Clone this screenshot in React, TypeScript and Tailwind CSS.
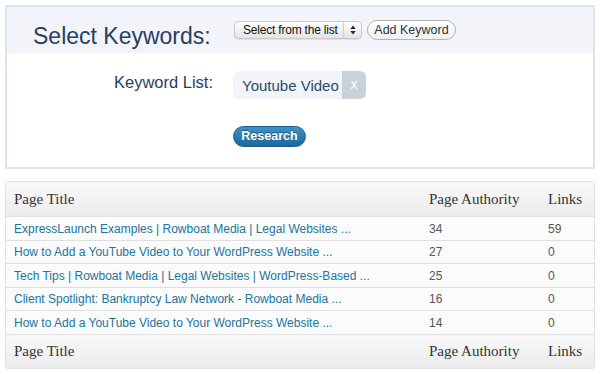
const rows = [
  { title: "ExpressLaunch Examples | Rowboat Media | Legal Websites ...", pa: 34, links: 59 },
  { title: "How to Add a YouTube Video to Your WordPress Website ...", pa: 27, links: 0 },
  { title: "Tech Tips | Rowboat Media | Legal Websites | WordPress-Based ...", pa: 25, links: 0 },
  { title: "Client Spotlight: Bankruptcy Law Network - Rowboat Media ...", pa: 16, links: 0 },
  { title: "How to Add a YouTube Video to Your WordPress Website ...", pa: 14, links: 0 },
];

function HeadRow() {
  return (
    <div className="grid grid-cols-[415px_119px_1fr] items-center h-full text-[15px] text-[#333] font-['Liberation_Serif',serif]">
      <div className="px-2">Page Title</div>
      <div className="px-2">Page Authority</div>
      <div className="px-2">Links</div>
    </div>
  );
}

export default function App() {
  return (
    <div className="w-[600px] h-[374px] bg-white p-[5px] font-['Liberation_Sans',Arial,sans-serif]">
      {/* Keyword panel */}
      <div className="border-2 border-[#dbe3ec] flex flex-col">
        <div className="h-[46px] bg-[#f2f4f9] flex items-center">
          <div className="w-[206px] pl-[26px] pt-[13px] text-[23px] text-[#27405e] leading-[1.15] shrink-0">
            Select Keywords:
          </div>
          <div className="ml-[21px] flex items-center gap-[5px]">
            <div className="h-[18px] w-[128px] flex items-center rounded-[4px] border border-[#c8c8c8] bg-gradient-to-b from-white to-[#e4e4e4] text-[12px] text-[#111] shadow-[0_1px_1px_rgba(0,0,0,0.08)]">
              <span className="flex-1 pl-[8px] leading-none tracking-[-0.2px]">Select from the list</span>
              <span className="h-full w-[18px] border-l border-[#cfcfcf] flex items-center justify-center">
                <svg width="6" height="10" viewBox="0 0 6 10">
                  <path d="M3 0.5 L5.6 4 H0.4 Z" fill="#222" />
                  <path d="M3 9.5 L5.6 6 H0.4 Z" fill="#222" />
                </svg>
              </span>
            </div>
            <button className="block h-[20px] w-[89px] rounded-full border border-[#b5b5b5] bg-gradient-to-b from-white to-[#f0f0f0] text-[12.5px] text-[#333] leading-none">
              Add Keyword
            </button>
          </div>
        </div>
        <div className="flex flex-col pt-[18px] pb-[20px]">
          <div className="flex items-start">
            <div className="w-[206px] pt-[2px] text-right text-[16.5px] text-[#27405e] leading-[1.15] shrink-0">
              Keyword List:
            </div>
            <div className="ml-[20px] flex h-[28px] rounded-[6px] overflow-hidden bg-[#f1f4f8]">
              <span className="w-[109px] pl-[9px] flex items-center text-[15px] text-[#2b4a6b] leading-none">
                Youtube Video
              </span>
              <span className="w-[24px] bg-[#c9d1db] flex items-center justify-center text-white text-[14px] leading-none pb-[2px]">
                x
              </span>
            </div>
          </div>
          <div className="mt-[27px] pl-[226px] flex">
            <button className="block h-[21px] w-[73px] rounded-full bg-gradient-to-b from-[#3f92c8] to-[#1d6698] border border-[#1a5e8c] text-white font-bold text-[12.5px] leading-none [text-shadow:0_-1px_0_rgba(0,0,0,0.35)]">
              Research
            </button>
          </div>
        </div>
      </div>

      {/* Results table */}
      <div className="mt-[12px] border border-[#dfdfdf] rounded-[3px] overflow-hidden bg-[#fbfbfb]">
        <div className="h-[35px] bg-gradient-to-b from-[#f9f9f9] to-[#ececec] border-b border-[#dfdfdf]">
          <HeadRow />
        </div>
        {rows.map((r, i) => (
          <div
            key={i}
            className="grid grid-cols-[415px_119px_1fr] items-center h-[23.5px] border-t border-white border-b border-b-[#dfdfdf] text-[12px]"
          >
            <div className="px-2 text-[#21759b] whitespace-nowrap">{r.title}</div>
            <div className="px-2 text-[#555]">{r.pa}</div>
            <div className="px-2 text-[#555]">{r.links}</div>
          </div>
        ))}
        <div className="h-[33px] bg-gradient-to-b from-[#f9f9f9] to-[#ececec]">
          <HeadRow />
        </div>
      </div>
    </div>
  );
}
